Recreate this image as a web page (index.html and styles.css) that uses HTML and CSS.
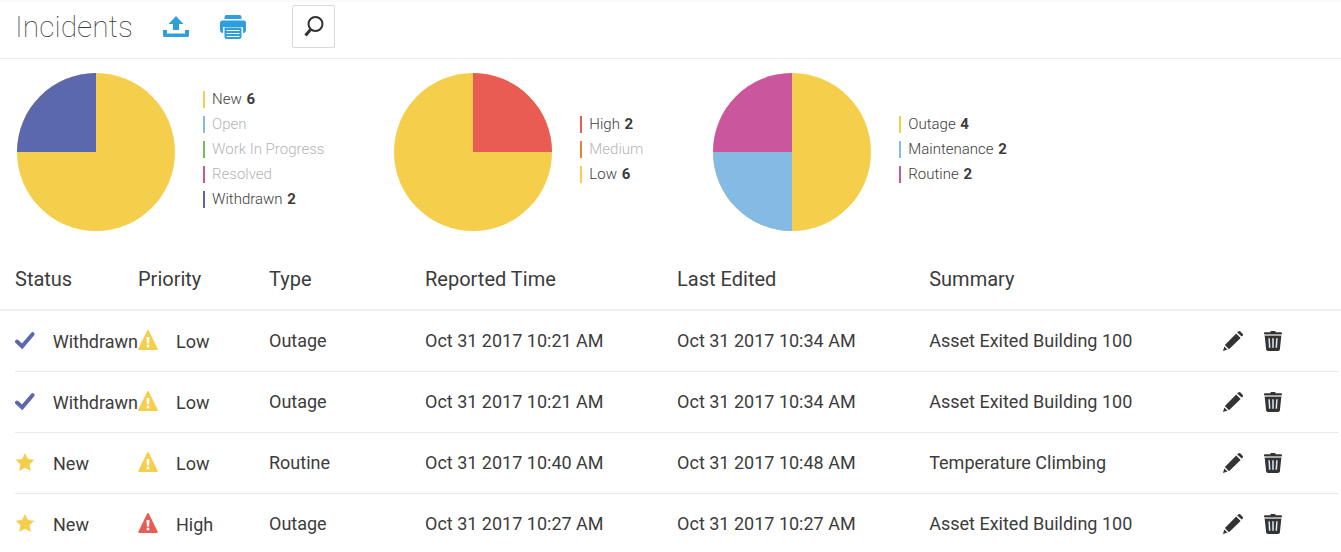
FILE: index.html
```html
<!DOCTYPE html>
<html lang="en">
<head>
  <meta charset="utf-8">
  <title>Incidents</title>
  <link rel="stylesheet" href="styles.css">
</head>
<body>
  <!-- shared icons -->
  <svg class="sprite" aria-hidden="true">
    <symbol id="check" viewBox="0 0 20 20">
      <path d="M2 11.500l5.300 5L18 4" fill="none" stroke="currentColor" stroke-width="4" stroke-linecap="round"/>
    </symbol>
    <symbol id="star" viewBox="0 0 20 18">
      <path d="M10 0l2.9 6 6.4.8-4.7 4.5 1.2 6.6L10 14.7 4.2 17.900l1.200-6.600L.7 6.800l6.400-.8z" fill="currentColor"/>
    </symbol>
    <symbol id="warning" viewBox="0 0 20 20">
      <path d="M9.2.6q.8-1.200 1.600 0l8.900 18.200q.4 1.200-.9 1.200H1.200Q-.1 20 .3 18.800z" fill="currentColor"/>
      <path d="M8.500 7h3l-.4 6.500H8.900zM8.700 14.800h2.600v2.500H8.700z" fill="#fff"/>
    </symbol>
    <symbol id="pencil" viewBox="0 0 20 20">
      <path d="M0 20l1.300-4.600 3.200 3.200zM1.900 14L13.200 2.600l4.400 4.400L6 18.200z" fill="currentColor"/>
      <path d="M14.200 1.600L15.300.5q1-.9 2 0l2.300 2.300q.8.900 0 1.900l-.9.900z" fill="currentColor"/>
    </symbol>
    <symbol id="trash" viewBox="0 0 18 20">
      <path d="M6.500 1.200V.6q0-.6.600-.6h3.800q.6 0 .6.600v.6H17q1 0 1 1V3H0v-.8q0-1 1-1z" fill="currentColor"/>
      <path d="M.4 3h17.200v2H.4z" fill="#aaa"/>
      <path d="M.7 5h16.600l-1.400 13.200q-.2 1.800-2 1.800H4.100q-1.800 0-2-1.800z" fill="currentColor"/>
      <path d="M5.100 7.200l.6 9.600M9 7.200v9.600M12.900 7.200l-.6 9.600" stroke="#dceaf5" stroke-width="1.500"/>
    </symbol>
  </svg>

  <header class="header">
    <h1>Incidents</h1>
    <button class="icon-btn" aria-label="Export">
      <svg width="26" height="22" viewBox="0 0 26 22" fill="#2f9fdc"><path d="M13 0l7.500 8H16v6h-6V8H5.500zM0 14h4v3.500h18V14h4v5.500q0 1.500-1.500 1.500h-23Q0 21 0 19.500z"/></svg>
    </button>
    <button class="icon-btn" aria-label="Print">
      <svg width="26" height="24" viewBox="0 0 26 24" fill="#2f9fdc"><path d="M4.500 4V2q0-2 2-2h13q2 0 2 2v2zM2.500 5.500h21Q26 5.500 26 8v7q0 3-3 3v-6H3v6q-3 0-3-3V8q0-2.500 2.500-2.500z"/><path d="M4.500 12.500h17V22q0 2-2 2h-13q-2 0-2-2z"/><path d="M6.500 15.500h13M6.500 18.500h13M6.500 21.500h13" stroke="#fff" stroke-width="1"/></svg>
    </button>
    <button class="search-btn" aria-label="Search">
      <svg width="20" height="21" viewBox="0 0 20 21" fill="none" stroke="#333"><circle cx="11.500" cy="8" r="7" stroke-width="2"/><path d="M7 13L1.500 19.500" stroke-width="3"/></svg>
    </button>
  </header>

  <section class="charts">
    <div class="chart">
      <svg class="pie" viewBox="-79 -79 158 158">
        <circle r="79" fill="#f5cf4b"/>
        <path d="M0 0h-79A79 79 0 0 1 0-79z" fill="#5b68ad"/>
      </svg>
      <ul class="legend">
        <li class="yellow">New <b>6</b></li>
        <li class="blue empty">Open</li>
        <li class="green empty">Work In Progress</li>
        <li class="pink empty">Resolved</li>
        <li class="indigo">Withdrawn <b>2</b></li>
      </ul>
    </div>

    <div class="chart">
      <svg class="pie" viewBox="-79 -79 158 158">
        <circle r="79" fill="#f5cf4b"/>
        <path d="M0 0v-79A79 79 0 0 1 79 0z" fill="#e95c54"/>
      </svg>
      <ul class="legend">
        <li class="red">High <b>2</b></li>
        <li class="orange empty">Medium</li>
        <li class="yellow">Low <b>6</b></li>
      </ul>
    </div>

    <div class="chart">
      <svg class="pie" viewBox="-79 -79 158 158">
        <circle r="79" fill="#f5cf4b"/>
        <path d="M0 0v79A79 79 0 0 1-79 0z" fill="#84bae4"/>
        <path d="M0 0h-79A79 79 0 0 1 0-79z" fill="#ca579d"/>
      </svg>
      <ul class="legend">
        <li class="yellow">Outage <b>4</b></li>
        <li class="blue">Maintenance <b>2</b></li>
        <li class="pink">Routine <b>2</b></li>
      </ul>
    </div>
  </section>

  <table class="incidents">
    <colgroup>
      <col class="col-status">
      <col class="col-priority">
      <col class="col-type">
      <col class="col-time">
      <col class="col-time">
      <col class="col-summary">
      <col>
    </colgroup>
    <thead>
      <tr>
        <th>Status</th>
        <th>Priority</th>
        <th>Type</th>
        <th>Reported Time</th>
        <th>Last Edited</th>
        <th>Summary</th>
        <th></th>
      </tr>
    </thead>
    <tbody>
      <tr>
        <td><span class="tag withdrawn"><svg><use href="#check"/></svg><span>Withdrawn</span></span></td>
        <td><span class="tag low"><svg><use href="#warning"/></svg><span>Low</span></span></td>
        <td>Outage</td>
        <td>Oct 31 2017 10:21 AM</td>
        <td>Oct 31 2017 10:34 AM</td>
        <td>Asset Exited Building 100</td>
        <td><div class="actions"><button aria-label="Edit"><svg><use href="#pencil"/></svg></button><button aria-label="Delete"><svg><use href="#trash"/></svg></button></div></td>
      </tr>
      <tr>
        <td><span class="tag withdrawn"><svg><use href="#check"/></svg><span>Withdrawn</span></span></td>
        <td><span class="tag low"><svg><use href="#warning"/></svg><span>Low</span></span></td>
        <td>Outage</td>
        <td>Oct 31 2017 10:21 AM</td>
        <td>Oct 31 2017 10:34 AM</td>
        <td>Asset Exited Building 100</td>
        <td><div class="actions"><button aria-label="Edit"><svg><use href="#pencil"/></svg></button><button aria-label="Delete"><svg><use href="#trash"/></svg></button></div></td>
      </tr>
      <tr>
        <td><span class="tag new"><svg><use href="#star"/></svg><span>New</span></span></td>
        <td><span class="tag low"><svg><use href="#warning"/></svg><span>Low</span></span></td>
        <td>Routine</td>
        <td>Oct 31 2017 10:40 AM</td>
        <td>Oct 31 2017 10:48 AM</td>
        <td>Temperature Climbing</td>
        <td><div class="actions"><button aria-label="Edit"><svg><use href="#pencil"/></svg></button><button aria-label="Delete"><svg><use href="#trash"/></svg></button></div></td>
      </tr>
      <tr>
        <td><span class="tag new"><svg><use href="#star"/></svg><span>New</span></span></td>
        <td><span class="tag high"><svg><use href="#warning"/></svg><span>High</span></span></td>
        <td>Outage</td>
        <td>Oct 31 2017 10:27 AM</td>
        <td>Oct 31 2017 10:27 AM</td>
        <td>Asset Exited Building 100</td>
        <td><div class="actions"><button aria-label="Edit"><svg><use href="#pencil"/></svg></button><button aria-label="Delete"><svg><use href="#trash"/></svg></button></div></td>
      </tr>
    </tbody>
  </table>
</body>
</html>
```

FILE: styles.css
```css
body {
  margin: 0;
  background: #fff;
  color: #3c3c3c;
  font-family: Roboto, "Liberation Sans", sans-serif;
  font-size: 18px;
}

button {
  padding: 0;
  border: 0;
  background: none;
  color: #333;
  cursor: pointer;
}

svg {
  display: block;
}

.sprite {
  position: absolute;
  width: 0;
  height: 0;
}

/* top bar */
.header {
  display: flex;
  align-items: center;
  height: 49px;
  padding: 0 15px 7px;
  border-top: 2px solid #fafafa;
  border-bottom: 1px solid #ececec;
}

.header h1 {
  margin: 0 30px 0 0;
  font-size: 30px;
  font-weight: 100;
  line-height: 40px;
}

.icon-btn {
  margin-right: 31px;
}

.search-btn {
  display: flex;
  align-items: center;
  justify-content: center;
  width: 43px;
  height: 43px;
  margin-left: 15px;
  border: 1px solid #d9d9d9;
  border-radius: 2px;
}

/* pie charts */
.charts {
  display: flex;
  gap: 70px;
  padding: 14px 17px 18px;
}

.chart {
  display: flex;
  align-items: center;
  gap: 28px;
}

.pie {
  width: 158px;
  height: 158px;
}

.legend {
  display: grid;
  gap: 8px;
  margin: 0 0 6px;
  padding: 0;
  list-style: none;
  font-size: 15px;
  font-weight: 300;
  line-height: 17px;
}

.legend li {
  padding-left: 7px;
  border-left: 2px solid;
  white-space: nowrap;
}

.legend b {
  margin-left: 1px;
  font-weight: 700;
}

.legend .empty { color: #b5b5b5; }

.legend .yellow { border-color: #f5cf4b; }
.legend .blue { border-color: #84bae4; }
.legend .green { border-color: #7fb955; }
.legend .pink { border-color: #ca579d; }
.legend .indigo { border-color: #5b68ad; }
.legend .red { border-color: #e95c54; }
.legend .orange { border-color: #e97f3e; }

/* incident list */
.incidents {
  width: 100%;
  table-layout: fixed;
  border-collapse: separate;
  border-spacing: 0;
}

.col-status { width: 138px; }
.col-priority { width: 131px; }
.col-type { width: 156px; }
.col-time { width: 18.8%; }
.col-summary { width: 21.9%; }

.incidents th,
.incidents td {
  padding: 0;
  text-align: left;
  white-space: nowrap;
}

.incidents th:first-child,
.incidents td:first-child {
  padding-left: 15px;
}

.incidents th {
  height: 60px;
  border-bottom: 2px solid #efefef;
  font-size: 20px;
  font-weight: 400;
}

.incidents td {
  height: 59px;
  padding-bottom: 2px;
  background: linear-gradient(#e8e8e8, #e8e8e8) no-repeat 0 100% / 100% 1px;
}

/* the row line starts where the text does */
.incidents td:first-child {
  background-position: 15px 100%;
}

.incidents td:last-child {
  background-size: calc(100% - 3px) 1px;
}

.tag {
  display: flex;
  align-items: center;
  gap: 18px;
  padding-top: 2px;
}

.tag svg {
  width: 20px;
  height: 20px;
  margin-bottom: 4px;
}

.withdrawn svg { color: #5b68ad; }
.new svg,
.low svg { color: #f5cf4b; }
.high svg { color: #e95c54; }

.actions {
  display: flex;
  gap: 20px;
}

.actions svg {
  width: 20px;
  height: 20px;
}
```
